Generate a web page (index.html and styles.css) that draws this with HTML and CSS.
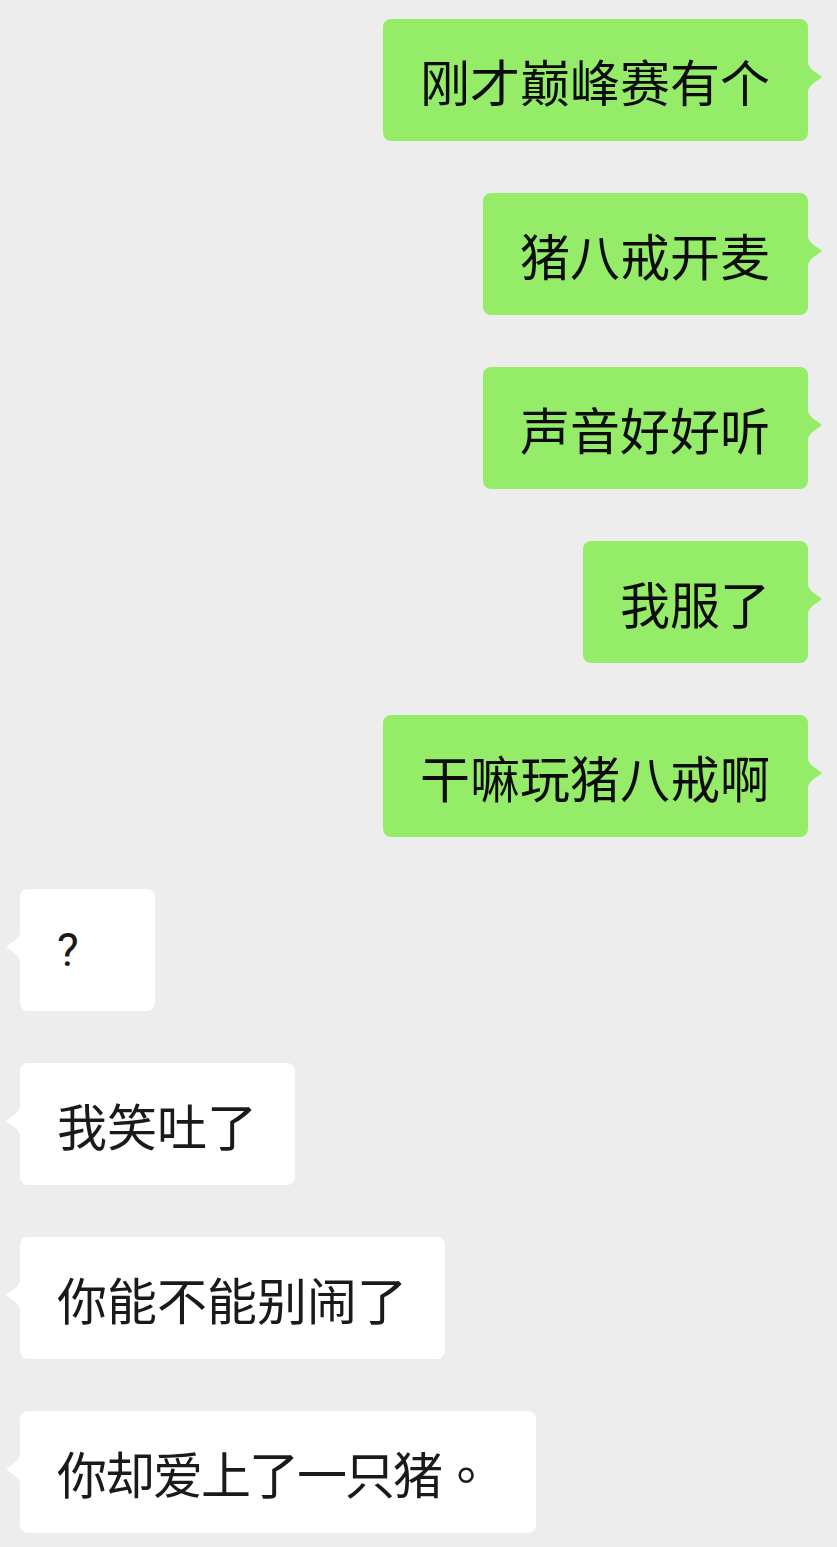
FILE: index.html
```html
<!DOCTYPE html>
<html lang="zh-CN">
<head>
<meta charset="utf-8">
<title>chat</title>
<link rel="stylesheet" href="styles.css">
</head>
<body>
<div class="chat">
  <div class="msg me"><div class="bubble">刚才巅峰赛有个<svg class="tail" viewBox="0 0 16 32"><path d="M0 0 C1 4 3 7 6 9.5 L13.8 15 Q15.5 16 13.8 17 L6 22.5 C3 25 1 28 0 32 Z"/></svg></div></div>
  <div class="msg me"><div class="bubble">猪八戒开麦<svg class="tail" viewBox="0 0 16 32"><path d="M0 0 C1 4 3 7 6 9.5 L13.8 15 Q15.5 16 13.8 17 L6 22.5 C3 25 1 28 0 32 Z"/></svg></div></div>
  <div class="msg me"><div class="bubble">声音好好听<svg class="tail" viewBox="0 0 16 32"><path d="M0 0 C1 4 3 7 6 9.5 L13.8 15 Q15.5 16 13.8 17 L6 22.5 C3 25 1 28 0 32 Z"/></svg></div></div>
  <div class="msg me"><div class="bubble">我服了<svg class="tail" viewBox="0 0 16 32"><path d="M0 0 C1 4 3 7 6 9.5 L13.8 15 Q15.5 16 13.8 17 L6 22.5 C3 25 1 28 0 32 Z"/></svg></div></div>
  <div class="msg me"><div class="bubble">干嘛玩猪八戒啊<svg class="tail" viewBox="0 0 16 32"><path d="M0 0 C1 4 3 7 6 9.5 L13.8 15 Q15.5 16 13.8 17 L6 22.5 C3 25 1 28 0 32 Z"/></svg></div></div>
  <div class="msg other"><div class="bubble"><span class="latin">?</span><svg class="tail" viewBox="0 0 16 32"><path d="M0 0 C1 4 3 7 6 9.5 L13.8 15 Q15.5 16 13.8 17 L6 22.5 C3 25 1 28 0 32 Z"/></svg></div></div>
  <div class="msg other"><div class="bubble">我笑吐了<svg class="tail" viewBox="0 0 16 32"><path d="M0 0 C1 4 3 7 6 9.5 L13.8 15 Q15.5 16 13.8 17 L6 22.5 C3 25 1 28 0 32 Z"/></svg></div></div>
  <div class="msg other"><div class="bubble">你能不能别闹了<svg class="tail" viewBox="0 0 16 32"><path d="M0 0 C1 4 3 7 6 9.5 L13.8 15 Q15.5 16 13.8 17 L6 22.5 C3 25 1 28 0 32 Z"/></svg></div></div>
  <div class="msg other"><div class="bubble tight">你却爱上了一只猪<span class="stop" lang="zh-TW">。</span><svg class="tail" viewBox="0 0 16 32"><path d="M0 0 C1 4 3 7 6 9.5 L13.8 15 Q15.5 16 13.8 17 L6 22.5 C3 25 1 28 0 32 Z"/></svg></div></div>
</div>
</body>
</html>
```
FILE: styles.css
```css
html, body {
  margin: 0;
  padding: 0;
  background: #ededed;
}
body {
  width: 837px;
  height: 1547px;
  overflow: hidden;
  font-family: "Noto Sans CJK SC", "Noto Sans", sans-serif;
}
.chat {
  display: flex;
  flex-direction: column;
  gap: 52px;
  padding: 19px 29px 14px 20px;
}
.msg {
  display: flex;
}
.msg.me {
  justify-content: flex-end;
}
.msg.other {
  justify-content: flex-start;
}
.bubble {
  position: relative;
  box-sizing: border-box;
  min-width: 135px;
  padding: 36px 38px 36px 37px;
  font-size: 50px;
  line-height: 50px;
  border-radius: 8px;
  white-space: nowrap;
}
.bubble.tight {
  letter-spacing: -2px;
}
.me .bubble {
  background: #95ec69;
  color: #0c0c0c;
}
.other .bubble {
  background: #ffffff;
  color: #1a1a1a;
}
.tail {
  position: absolute;
  top: 42px;
  width: 16px;
  height: 32px;
}
.me .tail {
  left: 100%;
  margin-left: -1px;
  fill: #95ec69;
}
.other .tail {
  right: 100%;
  margin-right: -1px;
  fill: #ffffff;
  transform: scaleX(-1);
}
.latin {
  display: inline-block;
  vertical-align: top;
  height: 50px;
  line-height: 50px;
  font-family: Roboto, "Liberation Sans", sans-serif;
  font-size: 46px;
}
.stop {
  display: inline-block;
  vertical-align: top;
  height: 50px;
  font-family: "Noto Sans CJK TC", sans-serif;
  margin-right: 9px;
}
```
